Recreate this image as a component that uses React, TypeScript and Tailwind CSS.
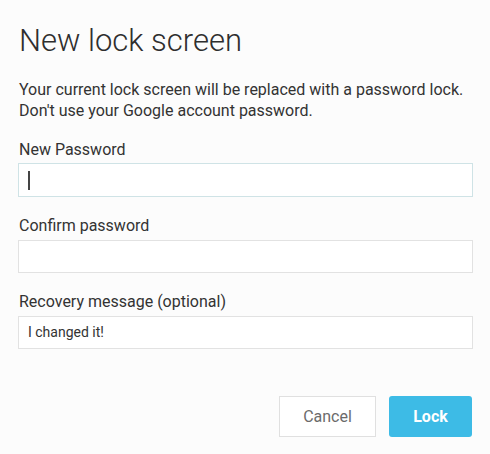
import React from "react";

export default function App() {
  return (
    <div
      className="w-[490px] h-[454px] bg-[#fcfcfc] text-[#333333] overflow-hidden"
      style={{ fontFamily: "Roboto, 'Noto Sans', sans-serif" }}
    >
      <div className="pl-[19px] pr-[17px]">
        <h1 className="pt-[21px] text-[31px] leading-[40px] font-light text-[#2e2e2e]">
          New lock screen
        </h1>
        <p className="mt-[18px] text-[16px] leading-[21px] text-[#333]">
          Your current lock screen will be replaced with a password lock.
          <br />
          Don't use your Google account password.
        </p>
        <label className="block mt-[19px] text-[16px] leading-[20px]">New Password</label>
        <div className="mt-[3px] -ml-px h-[34px] border border-[#cfe3e6] bg-white flex items-center pl-[9px]">
          <div className="w-[2px] h-[19px] bg-[#444]" />
        </div>
        <label className="block mt-[19px] text-[16px] leading-[20px]">Confirm password</label>
        <div className="mt-[4px] -ml-px h-[33px] border border-[#e2e2e2] bg-white" />
        <label className="block mt-[19px] text-[16px] leading-[20px]">Recovery message (optional)</label>
        <div className="mt-[4px] -ml-px h-[33px] border border-[#e2e2e2] bg-white flex items-center pl-[9px] text-[14px]">
          I changed it!
        </div>
        <div className="mt-[47px] flex justify-end gap-[13px] pr-[1px]">
          <button className="w-[97px] h-[41px] border border-[#e0e0e0] bg-white text-[#6b6b6b] text-[16px]">
            Cancel
          </button>
          <button className="w-[83px] h-[41px] rounded-[3px] bg-[#3dbbe6] text-white font-bold text-[16px]">
            Lock
          </button>
        </div>
      </div>
    </div>
  );
}
